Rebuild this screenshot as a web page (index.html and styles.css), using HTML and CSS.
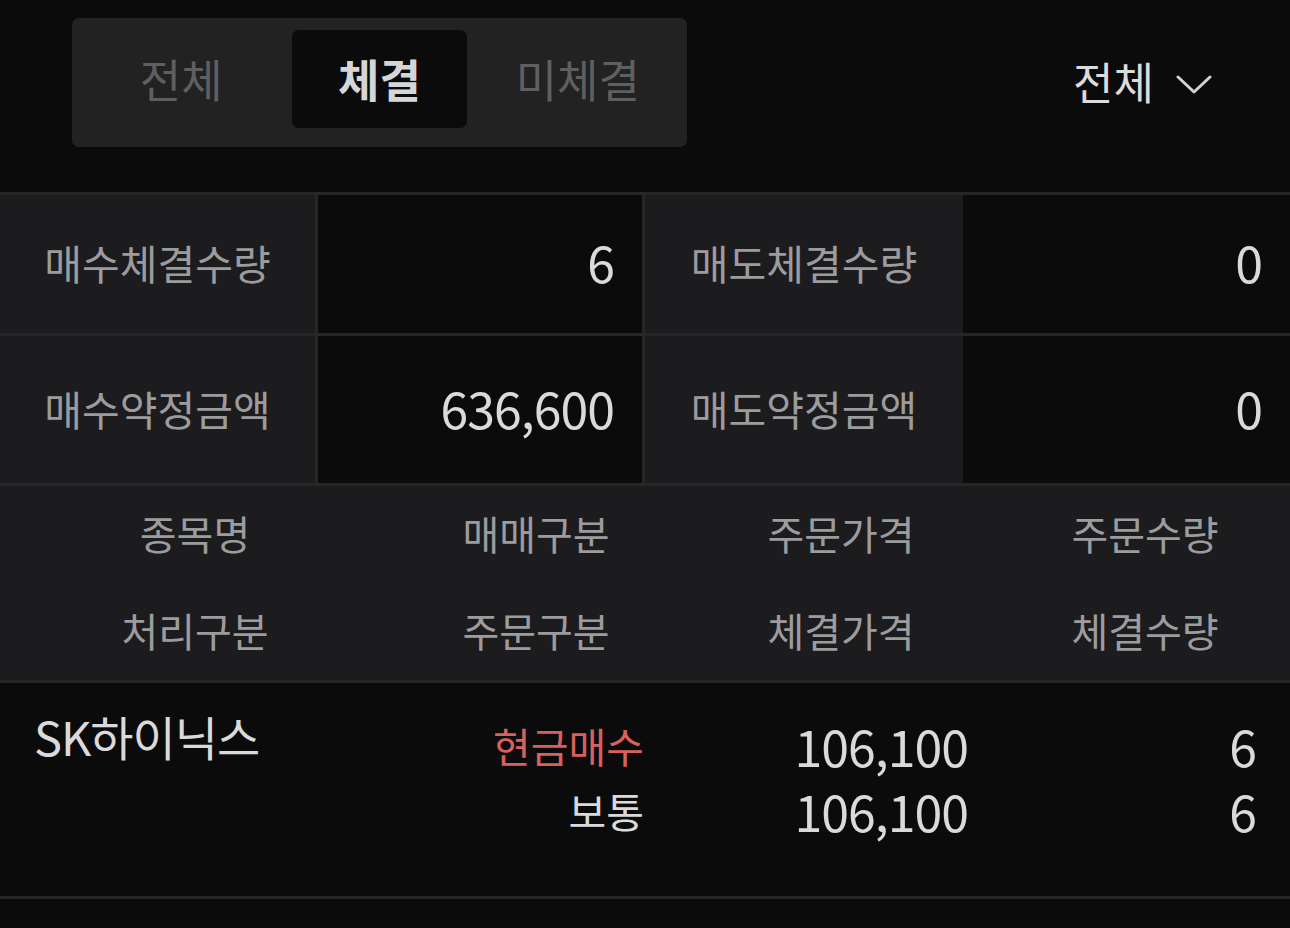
FILE: index.html
```html
<html>
<head>
    <title>체결내역</title>
    <link rel="stylesheet" href="styles.css">
</head>

<body>
    <div class="top">
        <div class="tabs">
            <div class="tab">전체</div>
            <div class="tab active">체결</div>
            <div class="tab">미체결</div>
        </div>
        <div class="filter">
            <span>전체</span>
            <svg width="36" height="20" viewBox="0 0 36 20">
                <path d="M2 2 L18 17 L34 2" fill="none" stroke="#d2d2d4" stroke-width="3" stroke-linecap="round" stroke-linejoin="round"/>
            </svg>
        </div>
    </div>

    <div class="summary">
        <div class="row row1">
            <div class="label sep">매수체결수량</div>
            <div class="value sep">6</div>
            <div class="label">매도체결수량</div>
            <div class="value">0</div>
        </div>
        <div class="row row2">
            <div class="label sep">매수약정금액</div>
            <div class="value sep">636,600</div>
            <div class="label">매도약정금액</div>
            <div class="value">0</div>
        </div>
    </div>

    <div class="head">
        <div class="cols">
            <div>종목명</div>
            <div>매매구분</div>
            <div>주문가격</div>
            <div>주문수량</div>
        </div>
        <div class="cols">
            <div>처리구분</div>
            <div>주문구분</div>
            <div>체결가격</div>
            <div>체결수량</div>
        </div>
    </div>

    <div class="item cols">
        <div class="name">SK하이닉스</div>
        <div class="num kind">
            <div class="buy">현금매수</div>
            <div>보통</div>
        </div>
        <div class="num price">
            <div class="digits">106,100</div>
            <div class="digits">106,100</div>
        </div>
        <div class="num qty">
            <div class="digits">6</div>
            <div class="digits">6</div>
        </div>
    </div>
</body>
</html>
```

FILE: styles.css
```css
* {
    box-sizing: border-box;
}

body {
    margin: 0;
    background: #0b0b0b;
    font-family: "Noto Sans CJK KR", "Noto Sans", sans-serif;
    color: #dadadc;
    width: 1290px;
}

.top {
    display: flex;
    justify-content: space-between;
    align-items: center;
    height: 195px;
    padding: 18px 78px 45px 72px;
    border-bottom: 3px solid #262627;
}

.tabs {
    display: flex;
    gap: 24px;
    width: 615px;
    height: 129px;
    padding: 12px 22px 19px 22px;
    background: #222223;
    border-radius: 7px;
}

.tab {
    flex: 1;
    display: flex;
    justify-content: center;
    align-items: center;
    font-size: 45px;
    color: #5f5f61;
    border-radius: 7px;
    padding-bottom: 2px;
}

.tab.active {
    background: #0b0b0b;
    color: #d6d6d8;
    font-weight: bold;
}

.filter {
    display: flex;
    align-items: center;
    gap: 22px;
    font-size: 44px;
    color: #dcdcde;
}

.filter span {
    margin-top: -4px;
}

.filter svg {
    margin-top: 4px;
}

.row {
    display: flex;
    border-bottom: 3px solid #262627;
}

.row1 {
    height: 141px;
}

.row2 {
    height: 150px;
}

.label {
    width: 318px;
    background: #1c1c1e;
    color: #9c9c9e;
    font-size: 41px;
    display: flex;
    align-items: center;
    justify-content: center;
    padding-bottom: 4px;
}

.value {
    flex: 1;
    background: #0b0b0b;
    font-size: 50px;
    letter-spacing: -1px;
    display: flex;
    align-items: center;
    justify-content: flex-end;
    padding-right: 28px;
    padding-bottom: 6px;
}

.value.sep {
    flex: none;
    width: 327px;
}

.sep {
    border-right: 3px solid #262627;
}

.head {
    background: #1c1c1e;
    color: #9c9c9e;
    font-size: 40px;
    border-bottom: 3px solid #262627;
}

.cols {
    display: grid;
    grid-template-columns: 390px 292px 318px 1fr;
}

.head .cols {
    height: 97px;
    align-items: center;
    text-align: center;
}

.head .cols div {
    margin-top: -4px;
}

.item {
    height: 216px;
    padding-top: 30px;
    border-bottom: 3px solid #262627;
}

.name {
    font-size: 47px;
    line-height: 52px;
    padding-left: 34px;
    letter-spacing: -1px;
    margin-top: -3px;
}

.num {
    text-align: right;
    line-height: 65px;
}

.kind {
    font-size: 41px;
    padding-right: 38px;
}

.buy {
    color: #d9605e;
}

.price {
    padding-right: 32px;
}

.qty {
    padding-right: 34px;
}

.digits {
    font-size: 50px;
    letter-spacing: -1px;
}
```
